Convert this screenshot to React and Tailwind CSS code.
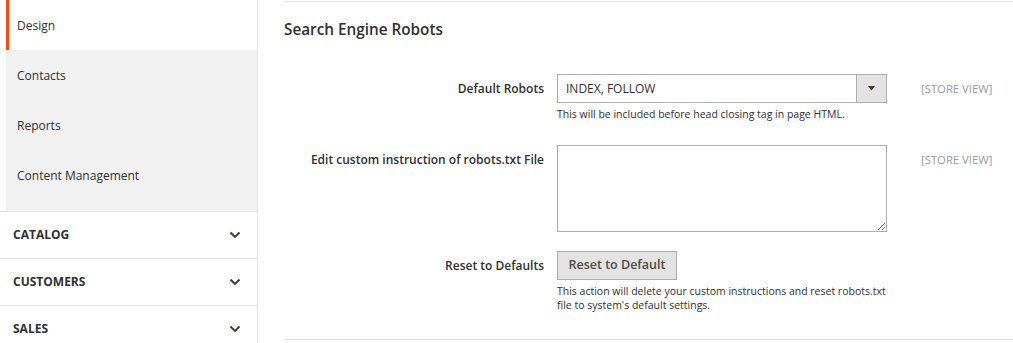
import React from "react";

const Chevron = () => (
  <svg width="12" height="8" viewBox="0 0 12 8" className="text-[#41362f]">
    <path d="M1.5 1.5 L6 6 L10.5 1.5" fill="none" stroke="currentColor" strokeWidth="1.8" />
  </svg>
);

export default function App() {
  const font = { fontFamily: '"Open Sans", "Liberation Sans", sans-serif' };
  return (
    <div className="flex w-[1013px] h-[343px] bg-white overflow-hidden text-[#303030]" style={font}>
      {/* Sidebar */}
      <div className="w-[258px] shrink-0 border-r border-[#e3e3e3] flex flex-col">
        <div className="pl-[6px]">
          <div className="h-[50px] pt-[1px] border-l-[3px] border-[#eb5202] bg-white flex items-center pl-[8px] text-[12px] text-[#303030]">
            Design
          </div>
          <div className="bg-[#f1f1f1] pb-[11px]">
            {["Contacts", "Reports", "Content Management"].map((t) => (
              <div key={t} className="h-[50px] pt-[1px] flex items-center pl-[11px] text-[12px]">
                {t}
              </div>
            ))}
          </div>
        </div>
        {["CATALOG", "CUSTOMERS", "SALES"].map((t) => (
          <div
            key={t}
            className="h-[47px] shrink-0 border-t border-[#e3e3e3] flex items-center justify-between pl-[13px] pr-[16px] text-[12px] font-bold text-[#303030]"
          >
            <span>{t}</span>
            <Chevron />
          </div>
        ))}
      </div>

      {/* Main */}
      <div className="flex-1 pl-[26px]">
        <div className="mt-[1px] border-t border-[#e3e3e3]" />
        <h2 className="mt-[17px] text-[15.3px] font-semibold leading-[20px] text-[#303030]">
          Search Engine Robots
        </h2>

        <div className="mt-[35px] grid grid-cols-[260px_330px_1fr] gap-x-[13px]">
          {/* Row 1 */}
          <div className="text-right text-[12px] font-semibold leading-[29px]">Default Robots</div>
          <div>
            <div className="h-[29px] border border-[#adadad] flex bg-white">
              <div className="flex-1 flex items-center pl-[8px] text-[12px]">INDEX, FOLLOW</div>
              <div className="w-[30px] bg-[#e3e3e3] border-l border-[#adadad] flex items-center justify-center">
                <svg width="7" height="5" viewBox="0 0 7 5">
                  <path d="M0 0 L7 0 L3.5 4.5 Z" fill="#41362f" />
                </svg>
              </div>
            </div>
            <div className="mt-[4px] text-[10.5px] leading-[14px]">
              This will be included before head closing tag in page HTML.
            </div>
          </div>
          <div className="pl-[21px] text-[11.3px] text-[#999] leading-[29px]">[STORE VIEW]</div>

          {/* Row 2 */}
          <div className="mt-[24px] text-right text-[12px] font-semibold leading-[29px]">
            Edit custom instruction of robots.txt File
          </div>
          <div className="mt-[24px]">
            <textarea
              className="block w-[330px] h-[87px] border border-[#adadad] bg-white resize-y outline-none"
              defaultValue=""
            />
          </div>
          <div className="mt-[24px] pl-[21px] text-[11.3px] text-[#999] leading-[29px]">[STORE VIEW]</div>

          {/* Row 3 */}
          <div className="mt-[19px] text-right text-[12px] font-semibold leading-[29px]">Reset to Defaults</div>
          <div className="mt-[19px]">
            <button className="h-[29px] w-[120px] bg-[#e3e3e3] border border-[#adadad] text-[12.5px] font-semibold text-[#514943]">
              Reset to Default
            </button>
            <div className="mt-[4px] text-[10.5px] leading-[14px] w-[330px]">
              This action will delete your custom instructions and reset robots.txt file to system's default settings.
            </div>
          </div>
          <div />
        </div>
        <div className="mt-[27px] border-t border-[#e3e3e3]" />
      </div>
    </div>
  );
}
